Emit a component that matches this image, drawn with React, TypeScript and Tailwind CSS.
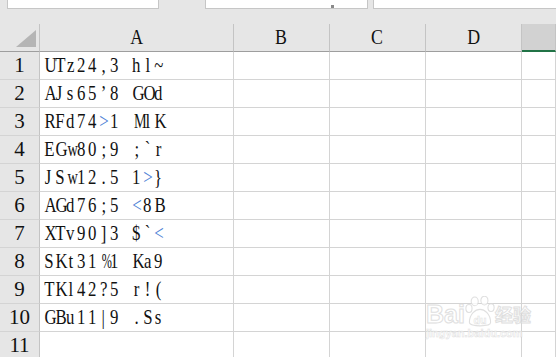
import React from 'react';

const rows = [
  'UTz24,3 hl~',
  'AJs65’8 GOd',
  'RFd74>1 MlK',
  'EGw80;9 ;`r',
  'JSw12.5 1>}',
  'AGd76;5 <8B',
  'XTv90]3 $`<',
  'SKt31%1 Ka9',
  'TKl42?5 r!(',
  'GBu11|9 .Ss',
  '',
];

const cols = ['A', 'B', 'C', 'D', ''];

function glyphScale(ch: string) {
  if (ch === '%') return 'scale-x-[0.58]';
  if ('MWmw'.includes(ch)) return 'scale-x-[0.68]';
  return 'scale-x-[0.8]';
}

function MonoText({ text }: { text: string }) {
  return (
    <span className="whitespace-pre">
      {text.split('').map((ch, i) => (
        <span key={i} className="inline-block w-[11px] text-center">
          <span
            className={`inline-block ${glyphScale(ch)} ${
              ch === '<' || ch === '>' ? 'text-[#4d7fd6]' : 'text-[#111]'
            }`}
          >
            {ch}
          </span>
        </span>
      ))}
    </span>
  );
}

export default function App() {
  return (
    <div
      className="relative w-[556px] h-[357px] overflow-hidden bg-[#e6e6e6] text-[21px]"
      style={{ fontFamily: '"Liberation Serif", "Noto Sans CJK SC", serif' }}
    >
      {/* formula bar remnants */}
      <div className="flex h-[24px] items-start">
        <div className="ml-[7px] h-[9px] w-[152px] border-b border-l border-r border-[#c6c6c6] bg-white" />
        <div className="relative ml-[46px] h-[9px] w-[163px] border-b border-l border-r border-[#c6c6c6] bg-white">
          <div className="absolute left-[125px] top-[5px] h-[3px] w-[3px] bg-[#8a8a8a]" />
        </div>
        <div className="ml-[5px] h-[9px] flex-1 border-b border-l border-[#c6c6c6] bg-white" />
      </div>

      {/* sheet */}
      <div className="grid grid-cols-[40px_194px_96px_96px_96px_1fr]">
        {/* header row */}
        <div className="relative h-[28px] border-b border-r border-b-[#9e9e9e] border-r-[#c4c4c4]">
          <svg className="absolute left-[15px] top-[5px]" width="22" height="19" viewBox="0 0 22 19">
            <polygon points="1,18 21,1 21,18" fill="#b5b5b5" />
          </svg>
        </div>
        {cols.map((c, i) => (
          <div
            key={i}
            className={`flex h-[28px] items-end justify-center leading-[26px] border-r border-r-[#c4c4c4] ${
              c === '' ? 'bg-[#d2d2d2] border-b-2 border-b-[#217346]' : 'border-b border-b-[#9e9e9e]'
            }`}
          >
            <span className="inline-block scale-x-[0.85] text-[#111] pb-[1px]">{c}</span>
          </div>
        ))}

        {rows.map((r, ri) => (
          <React.Fragment key={ri}>
            <div className="flex h-[28px] items-end justify-center border-b border-r border-b-[#d4d4d4] border-r-[#c4c4c4] bg-[#e6e6e6] leading-[26px] text-[#111]">
              <span className="pb-[1px]">{ri + 1}</span>
            </div>
            <div className="flex h-[28px] items-end border-b border-r border-[#d4d4d4] bg-white pl-[3px] leading-[26px]">
              <span className="pb-[1px]">
                <MonoText text={r} />
              </span>
            </div>
            {[0, 1, 2, 3].map((k) => (
              <div key={k} className="h-[28px] border-b border-r border-[#d4d4d4] bg-white" />
            ))}
          </React.Fragment>
        ))}
      </div>

      {/* watermark */}
      <div className="pointer-events-none absolute left-[426px] top-[296px] flex w-max flex-col items-start whitespace-nowrap opacity-80">
        <div className="flex items-end">
          <span
            className="text-[25px] font-bold leading-[26px] text-white"
            style={{ fontFamily: '"Liberation Sans", sans-serif', WebkitTextStroke: '1px #d8d8d8' }}
          >
            Bai
          </span>
          <svg width="30" height="32" viewBox="0 0 34 36" className="-mb-[1px]">
            <g fill="white" stroke="#d8d8d8" strokeWidth="1.2">
              <ellipse cx="11" cy="6" rx="4" ry="5" />
              <ellipse cx="22" cy="5" rx="4" ry="5" />
              <ellipse cx="4.5" cy="14" rx="3.5" ry="4.5" />
              <ellipse cx="29.5" cy="13" rx="3.5" ry="4.5" />
              <path d="M5 30 C5 20 12 15 17 15 C22 15 29 20 29 30 C29 35 5 35 5 30 Z" />
            </g>
            <text x="17" y="32" textAnchor="middle" fontSize="12" fontWeight="bold" fill="white" stroke="#d8d8d8" strokeWidth="0.6" fontFamily="Liberation Sans, sans-serif">du</text>
          </svg>
          <span
            className="text-[18px] font-bold leading-[26px] text-white"
            style={{ fontFamily: '"Noto Sans CJK SC", sans-serif', WebkitTextStroke: '1px #d8d8d8' }}
          >
            经验
          </span>
        </div>
        <span
          className="text-[11px] font-bold leading-[13px] text-white"
          style={{ fontFamily: '"Liberation Sans", sans-serif', WebkitTextStroke: '0.5px #d8d8d8' }}
        >
          jingyan.baidu.com
        </span>
      </div>
    </div>
  );
}
